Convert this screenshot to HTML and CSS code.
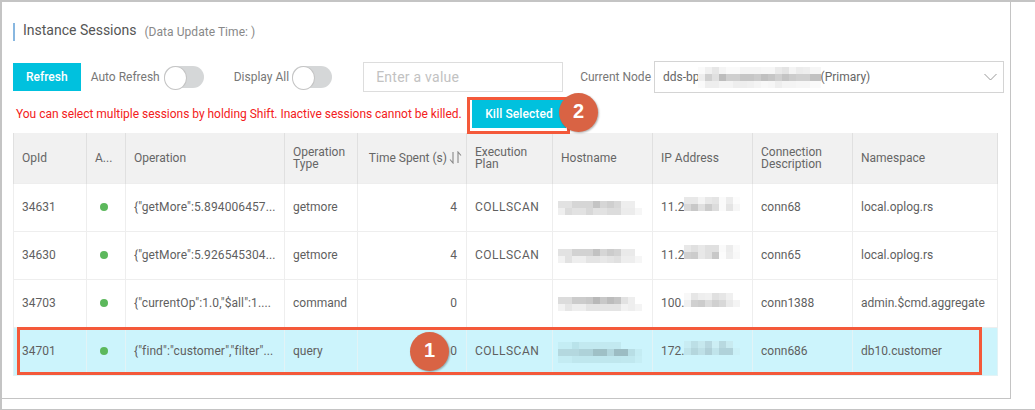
FILE: index.html
```html
<!DOCTYPE html>
<html lang="en">
<head>
<meta charset="utf-8">
<title>Instance Sessions</title>
<link rel="stylesheet" href="styles.css">
</head>
<body>
<div class="screen">
  <main class="panel">
    <header class="title-row">
      <h1 class="title">Instance Sessions</h1>
      <span class="subtitle">(Data Update Time: )</span>
    </header>

    <div class="toolbar">
      <button class="btn btn-refresh" type="button">Refresh</button>
      <span class="label label-auto">Auto Refresh</span>
      <span class="switch switch-auto"></span>
      <span class="label label-all">Display All</span>
      <span class="switch"></span>
      <input class="search" type="text" placeholder="Enter a value">
      <span class="label label-node">Current Node</span>
      <div class="select">
        <span>dds-bp</span><span class="mosaic m-node"></span><span>(Primary)</span>
        <svg class="chevron" width="13" height="8" viewBox="0 0 13 8"><path d="M.5 1l6 6 6-6" fill="none" stroke="#999" stroke-width="1"/></svg>
      </div>
    </div>

    <div class="notice-row">
      <p class="notice">You can select multiple sessions by holding Shift. Inactive sessions cannot be killed.</p>
      <button class="btn btn-kill" type="button">Kill Selected</button>
    </div>

    <table class="sessions">
      <colgroup>
        <col class="c-op"><col class="c-act"><col class="c-oper"><col class="c-type"><col class="c-time"><col class="c-plan"><col class="c-host"><col class="c-ip"><col class="c-conn"><col class="c-ns">
      </colgroup>
      <thead>
        <tr>
          <th>OpId</th>
          <th>A...</th>
          <th>Operation</th>
          <th>Operation Type</th>
          <th class="th-time"><span class="th-time-in">Time Spent (s)<svg class="sort" width="13" height="13" viewBox="0 0 13 13"><path d="M4 1v11L1 8.5M9 12V1l3 3.5" fill="none" stroke="#888" stroke-width="1.1"/></svg></span></th>
          <th>Execution Plan</th>
          <th>Hostname</th>
          <th>IP Address</th>
          <th>Connection Description</th>
          <th>Namespace</th>
        </tr>
      </thead>
      <tbody>
        <tr>
          <td>34631</td><td><span class="dot"></span></td>
          <td class="oper">{"getMore":5.894006457...</td>
          <td>getmore</td><td class="num">4</td><td class="plan">COLLSCAN</td>
          <td><span class="mosaic m-host1"></span></td>
          <td><span class="ip">11.2<span class="mosaic m-ip1"></span></span></td>
          <td>conn68</td><td>local.oplog.rs</td>
        </tr>
        <tr>
          <td>34630</td><td><span class="dot"></span></td>
          <td class="oper">{"getMore":5.926545304...</td>
          <td>getmore</td><td class="num">4</td><td class="plan">COLLSCAN</td>
          <td><span class="mosaic m-host2"></span></td>
          <td><span class="ip">11.2<span class="mosaic m-ip2"></span></span></td>
          <td>conn65</td><td>local.oplog.rs</td>
        </tr>
        <tr>
          <td>34703</td><td><span class="dot"></span></td>
          <td class="oper">{"currentOp":1.0,"$all":1....</td>
          <td>command</td><td class="num">0</td><td class="plan"></td>
          <td><span class="mosaic m-host3"></span></td>
          <td><span class="ip">100.<span class="mosaic m-ip3"></span></span></td>
          <td>conn1388</td><td>admin.$cmd.aggregate</td>
        </tr>
        <tr class="selected">
          <td>34701</td><td><span class="dot"></span></td>
          <td class="oper">{"find":"customer","filter"...</td>
          <td>query</td><td class="num">0</td><td class="plan">COLLSCAN</td>
          <td><span class="mosaic m-host4"></span></td>
          <td><span class="ip">172.<span class="mosaic m-ip4"></span></span></td>
          <td>conn686</td><td>db10.customer</td>
        </tr>
      </tbody>
    </table>

    <div class="mark mark-kill"></div>
    <div class="mark mark-row"></div>
    <div class="badge badge-1">1</div>
    <div class="badge badge-2">2</div>
  </main>
</div>
</body>
</html>
```

FILE: styles.css
```css
* { box-sizing: border-box; }

html, body {
  margin: 0;
  padding: 0;
  background: #fff;
}

body {
  width: 1035px;
  height: 410px;
  overflow: hidden;
  font-family: Roboto, "Liberation Sans", Arial, sans-serif;
  font-size: 12px;
  color: #555;
}

.screen {
  height: 410px;
  border-top: 2px solid #c4c4c4;
  border-left: 2px solid #c4c4c4;
  border-bottom: 1px solid #c4c4c4;
}

.panel {
  position: relative;
  width: 1009px;
  height: 397px;
  padding: 21px 0 0 11px;
  border-right: 1px solid #c4c4c4;
  border-bottom: 1px solid #c4c4c4;
}

/* Title */
.title-row {
  display: flex;
  align-items: center;
  height: 18px;
  padding-left: 8px;
  border-left: 2px solid #88b7e0;
}

.title {
  margin: 0 0 4px;
  font-size: 14px;
  font-weight: 400;
  color: #555;
}

.subtitle {
  margin: 0 0 0 8px;
  font-size: 12px;
  letter-spacing: 0.05px;
  color: #888;
}

/* Toolbar */
.toolbar {
  display: flex;
  align-items: center;
  width: 991px;
  height: 32px;
  margin-top: 20px;
}

.btn {
  border: 0;
  padding: 0;
  color: #fff;
  background: #00c1de;
  font-family: inherit;
  font-size: 12px;
  font-weight: 500;
}

.btn-refresh {
  width: 68px;
  height: 28px;
}

.label { color: #777; white-space: nowrap; }
.label-auto { margin-left: 10px; }
.label-all { margin-left: 30px; }
.label-node { margin-left: 17px; }

.switch {
  position: relative;
  flex: none;
  width: 40px;
  height: 22px;
  margin-left: 3px;
  border-radius: 11px;
  background: #d5d7d8;
}

.switch-auto { margin-left: 4px; }

.switch::after {
  content: "";
  position: absolute;
  left: 0;
  top: 0;
  width: 21px;
  height: 22px;
  border: 1px solid #c4c4c4;
  border-radius: 50%;
  background: #fff;
}

.search {
  flex: none;
  width: 200px;
  height: 30px;
  margin-left: 31px;
  padding: 0 12px;
  border: 1px solid #ddd;
  border-radius: 0;
  outline: 0;
  font-family: inherit;
  font-size: 14px;
  letter-spacing: 0.25px;
  color: #555;
}

.search::placeholder { color: #c2c2c2; opacity: 1; }

.select {
  display: flex;
  align-items: center;
  flex: none;
  width: 350px;
  height: 32px;
  margin-left: 3px;
  padding-left: 8px;
  border: 1px solid #d4d4d4;
  color: #666;
}

.chevron {
  margin-left: auto;
  margin-right: 6px;
}

/* Notice */
.notice-row {
  display: flex;
  align-items: center;
  height: 28px;
  margin-top: 7px;
  padding-left: 3px;
}

.notice {
  margin: 0;
  width: 456px;
  color: #f32020;
  letter-spacing: -0.025px;
  white-space: nowrap;
}

.btn-kill {
  width: 94px;
  height: 28px;
  letter-spacing: 0.1px;
}

/* Table */
.sessions {
  width: 984px;
  margin-top: 5px;
  border-collapse: collapse;
  table-layout: fixed;
}

.c-op { width: 73px; }
.c-act { width: 39px; }
.c-oper { width: 159px; }
.c-type { width: 73px; }
.c-time { width: 109px; }
.c-plan { width: 86px; }
.c-host, .c-ip, .c-conn { width: 100px; }
.c-ns { width: 145px; }

.sessions th {
  height: 50px;
  padding: 0 9px 0 8px;
  background: #f1f1f1;
  border: 1px solid #e0e0e0;
  border-width: 0 1px;
  font-weight: 400;
  line-height: 12px;
  text-align: left;
  color: #666;
}

.sessions th.th-time { text-align: right; }

.th-time-in {
  display: flex;
  align-items: center;
  justify-content: flex-end;
  margin-right: -5px;
  white-space: nowrap;
}

.sort { margin-left: 2px; flex: none; }

.sessions td {
  height: 48px;
  padding: 0 9px 0 8px;
  border: 1px solid #eee;
  white-space: nowrap;
  color: #5f5f5f;
}

.sessions td.num { text-align: right; }
.sessions td.plan { letter-spacing: 0.5px; }
.sessions td.oper { letter-spacing: 0.1px; }

.selected td {
  background: #ccf4fc;
  border-color: #e2f3f6;
}

.dot {
  display: block;
  width: 8px;
  height: 8px;
  margin-left: 5px;
  border-radius: 50%;
  background: #5cb85c;
}

.ip {
  display: flex;
  align-items: center;
}

/* Privacy mosaics, 7px tiles */
.mosaic {
  display: block;
  flex: none;
  background-repeat: no-repeat;
}

.m-host1, .m-host2, .m-host3, .m-host4 {
  width: 84px;
  height: 14px;
  margin: 2px 0 0 -3px;
  background-size: 100% 7px;
  background-position: 0 0, 0 7px;
}

.m-host1 {
  background-image:
    linear-gradient(90deg, #e2e2e2 14px, #d6d6d6 0 35px, #c4c4c4 0 42px, #d6d6d6 0 49px, #cfcfcf 0 56px, #d8d8d8 0 63px, #eee 0 77px, #fff 0),
    linear-gradient(90deg, #efefef 7px, #dcdcdc 0 14px, #e2e2e2 0 28px, #d8d8d8 0 35px, #e2e2e2 0 49px, #dcdcdc 0 63px, #ececec 0 77px, #f6f6f6 0);
}

.m-host2 {
  background-image:
    linear-gradient(90deg, #e2e2e2 14px, #d2d2d2 0 35px, #c2c2c2 0 42px, #d6d6d6 0 49px, #ccc 0 56px, #d2d2d2 0 63px, #eaeaea 0 77px, #fff 0),
    linear-gradient(90deg, #f2f2f2 7px, #e2e2e2 0 14px, #eee 0 28px, #e4e4e4 0 42px, #e8e8e8 0 49px, #e4e4e4 0 56px, #e0e0e0 0 63px, #eee 0 77px, #f6f6f6 0);
}

.m-host3 {
  background-image:
    linear-gradient(90deg, #dcdcdc 14px, #ccc 0 28px, #c8c8c8 0 35px, #b8b8b8 0 42px, #c8c8c8 0 49px, #bcbcbc 0 56px, #c4c4c4 0 63px, #e2e2e2 0 70px, #eee 0 77px, #fff 0),
    linear-gradient(90deg, #f2f2f2 7px, #e6e6e6 0 14px, #eee 0 28px, #e4e4e4 0 63px, #f2f2f2 0 70px, #eee 0 77px, #f4f4f4 0);
}

.m-host4 {
  height: 21px;
  background-position: 0 0, 0 7px, 0 14px;
  background-image:
    linear-gradient(90deg, #c4edf4 14px, #b9e3ea 0 21px, #c2e9f0 0 63px, #ccf4fc 0),
    linear-gradient(90deg, #b4d8df 21px, #aed2d9 0 35px, #9fc0c6 0 49px, #b2d6dd 0 56px, #9cbcc3 0 70px, #b8dee5 0 77px, #c4ecf3 0),
    linear-gradient(90deg, #c4ecf3 14px, #bfe7ee 0 63px, #c0e8ef 0 77px, #c6eef5 0);
}

.m-ip1, .m-ip2, .m-ip3, .m-ip4 {
  width: 56px;
  height: 14px;
  margin-bottom: 6px;
  background-size: 100% 7px;
  background-position: 0 0, 0 7px;
}

.m-ip1 {
  background-image:
    linear-gradient(90deg, #e8e8e8 14px, #f4f4f4 0 21px, #e8e8e8 0 28px, #e4e4e4 0 35px, #fafafa 0 42px, #ececec 0 49px, #fcfcfc 0),
    linear-gradient(90deg, #d8d8d8 7px, #c8c8c8 0 14px, #e0e0e0 0 21px, #ccc 0 28px, #dcdcdc 0 35px, #fafafa 0 42px, #e4e4e4 0 49px, #f6f6f6 0);
}

.m-ip2 {
  background-image:
    linear-gradient(90deg, #e8e8e8 7px, #e0e0e0 0 14px, #e8e8e8 0 21px, #e0e0e0 0 35px, #fafafa 0 42px, #ececec 0 49px, #fafafa 0),
    linear-gradient(90deg, #d0d0d0 7px, #ccc 0 14px, #e8e8e8 0 21px, #e0e0e0 0 28px, #c8c8c8 0 35px, #fcfcfc 0 42px, #eee 0 49px, #f8f8f8 0);
}

.m-ip3 {
  background-image:
    linear-gradient(90deg, #f8f8f8 7px, #e6e6e6 0 14px, #eee 0 21px, #f0f0f0 0 28px, #e0e0e0 0 35px, #e6e6e6 0 42px, #f0f0f0 0 49px, #fff 0),
    linear-gradient(90deg, #f0f0f0 7px, #d0d0d0 0 14px, #ccc 0 21px, #dcdcdc 0 28px, #d0d0d0 0 35px, #d8d8d8 0 42px, #eaeaea 0 49px, #f4f4f4 0);
}

.m-ip4 {
  background-image:
    linear-gradient(90deg, #c8ecf3 7px, #bcdfe6 0 14px, #c6e8ee 0 21px, #b8d8e0 0 28px, #cceef4 0 35px, #b8d9e0 0 42px, #c8eaf0 0 49px, #ccf4fc 0),
    linear-gradient(90deg, #c0e4eb 7px, #b4d6dd 0 14px, #bee0e7 0 21px, #b0d0d8 0 28px, #c0e4eb 0 35px, #b0d2da 0 49px, #caf0f7 0);
}

.m-node {
  width: 123px;
  height: 21px;
  margin-left: -2px;
  background-size: 100% 7px;
  background-position: 0 0, 0 7px, 0 14px;
  background-image:
    linear-gradient(90deg, #fafafa 7px, #f0f0f0 0 14px, #e6e6e6 0 21px, #f4f4f4 0 28px, #fafafa 0 42px, #f4f4f4 0 63px, #f6f6f6 0 77px, #eaeaea 0 84px, #e4e4e4 0 91px, #f4f4f4 0 98px, #ececec 0 105px, #eee 0 112px, #f6f6f6 0),
    linear-gradient(90deg, #eee 7px, #d0d0d0 0 14px, #e0e0e0 0 21px, #bdbdbd 0 28px, #cfcfcf 0 42px, #c6c6c6 0 56px, #cbcbcb 0 63px, #c0c0c0 0 70px, #c6c6c6 0 77px, #d0d0d0 0 84px, #c4c4c4 0 91px, #ccc 0 98px, #d0d0d0 0 112px, #c2c2c2 0),
    linear-gradient(90deg, #fafafa 7px, #eee 0 21px, #f4f4f4 0 35px, #eee 0 49px, #f0f0f0 0 56px, #f4f4f4 0 63px, #f8f8f8 0 70px, #f6f6f6 0 77px, #eee 0 84px, #f4f4f4 0 98px, #f6f6f6 0 112px, #fafafa 0);
}

/* Annotations over the screenshot */
.mark {
  position: absolute;
  border: 3px solid #f4593a;
  pointer-events: none;
}

.mark-kill {
  left: 465px;
  top: 95px;
  width: 103px;
  height: 37px;
}

.mark-row {
  left: 15px;
  top: 325px;
  width: 965px;
  height: 48px;
}

.badge {
  position: absolute;
  width: 39px;
  height: 39px;
  border-radius: 50%;
  background: #d96344;
  box-shadow: 1px 1px 2px rgba(0, 0, 0, 0.3);
  font-family: "Liberation Sans", Arial, sans-serif;
  font-size: 20px;
  font-weight: 700;
  line-height: 37px;
  text-align: center;
  color: #fff;
}

.badge-1 { left: 408px; top: 330px; }
.badge-2 { left: 557px; top: 91px; }
```
